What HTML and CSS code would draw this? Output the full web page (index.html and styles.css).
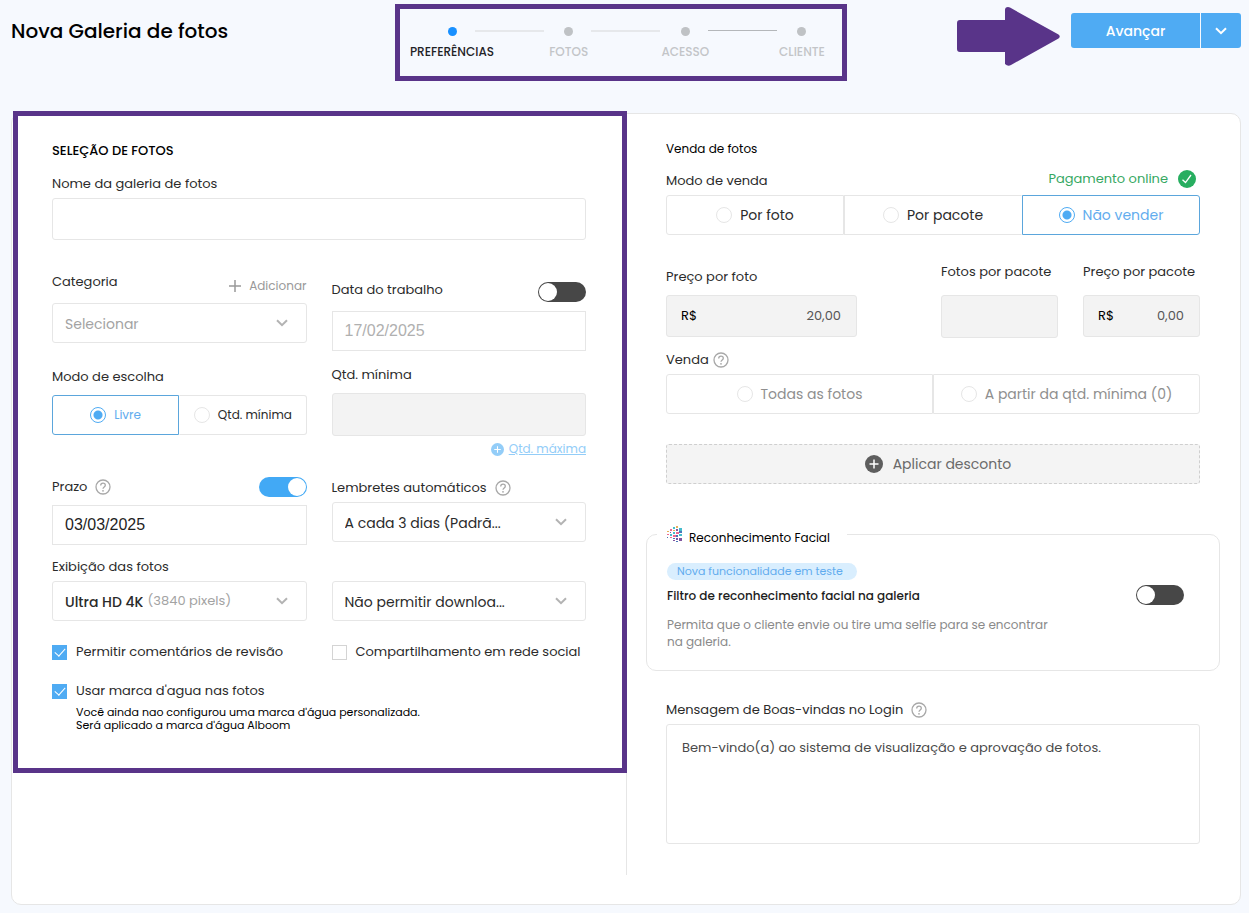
FILE: index.html
```html
<!DOCTYPE html>
<html lang="pt-BR">
<head>
<meta charset="utf-8">
<meta name="viewport" content="width=device-width, initial-scale=1">
<title>Nova Galeria de fotos</title>
<link rel="stylesheet" href="styles.css">
</head>
<body>
<svg class="sprite" aria-hidden="true">
  <symbol id="i-chevron" viewBox="0 0 12 8"><path d="M1 1.2 6 6.2 11 1.2" fill="none" stroke="currentColor" stroke-width="2"/></symbol>
  <symbol id="i-help" viewBox="0 0 16 16"><circle cx="8" cy="8" r="7" fill="none" stroke="currentColor" stroke-width="1.3"/><path d="M5.7 6.4C5.7 5 6.7 4.1 8 4.1s2.3.9 2.3 2.1c0 1.7-2.3 1.8-2.3 3.6" fill="none" stroke="currentColor" stroke-width="1.3"/><circle cx="8" cy="11.8" r=".9" fill="currentColor"/></symbol>
  <symbol id="i-plus-circle" viewBox="0 0 18 18"><circle cx="9" cy="9" r="9" fill="currentColor"/><path d="M9 4.5v9M4.5 9h9" stroke="#fff" stroke-width="1.5"/></symbol>
</svg>

<header class="topbar">
  <h1 class="topbar__title">Nova Galeria de fotos</h1>
  <ol class="steps">
    <li class="steps__item steps__item--current" aria-current="step">PREFERÊNCIAS</li>
    <li class="steps__item">FOTOS</li>
    <li class="steps__item">ACESSO</li>
    <li class="steps__item steps__item--dark">CLIENTE</li>
  </ol>
  <div class="topbar__actions">
    <svg class="arrow" viewBox="0 0 103 59" aria-hidden="true"><path d="M3 13h45V3q0-3 3-3l2 .6 48.500 27q2.500 1.900 0 3.800L54 58q-3 2-6-1V45H3q-3 0-3-3V16q0-3 3-3z" fill="#593489"/></svg>
    <div class="split">
      <button class="split__main" type="button">Avançar</button>
      <button class="split__more" type="button" aria-label="Mais opções"><svg class="chevron" aria-hidden="true"><use href="#i-chevron"/></svg></button>
    </div>
  </div>
</header>

<main class="card">
  <div class="card__side">
    <section class="selection">
      <h2 class="heading heading--strong">SELEÇÃO DE FOTOS</h2>
      <div class="field">
        <div class="field__head"><label for="name">Nome da galeria de fotos</label></div>
        <input class="control control--tall" id="name" type="text">
      </div>

      <div class="columns">
        <div class="columns__left">
          <div class="field">
            <div class="field__head field__head--split">
              <label for="category">Categoria</label>
              <button class="add" type="button"><svg class="add__icon" viewBox="0 0 12 12" aria-hidden="true"><path d="M6 0v12M0 6h12" stroke="currentColor" stroke-width="1.500"/></svg>Adicionar</button>
            </div>
            <div class="picker picker--empty">
              <select class="picker__select" id="category"><option>Selecionar</option></select>
              <svg class="chevron" aria-hidden="true"><use href="#i-chevron"/></svg>
            </div>
          </div>
          <div class="field field--choice">
            <div class="field__head field__head--mid"><span id="choice">Modo de escolha</span></div>
            <div class="seg seg--small" role="radiogroup" aria-labelledby="choice">
              <label class="seg__option seg__option--selected"><input class="radio" type="radio" name="choice" checked>Livre</label>
              <label class="seg__option"><input class="radio" type="radio" name="choice">Qtd. mínima</label>
            </div>
          </div>
          <div class="field field--deadline">
            <div class="field__head field__head--mid">
              <label for="deadline">Prazo</label><svg class="help" aria-hidden="true"><use href="#i-help"/></svg>
              <input class="toggle" type="checkbox" role="switch" aria-label="Prazo" checked>
            </div>
            <input class="control control--date" id="deadline" type="text" value="03/03/2025">
          </div>
          <div class="field field--display">
            <div class="field__head"><label for="display">Exibição das fotos</label></div>
            <div class="picker">
              <select class="picker__select picker__select--strong" id="display"><option>Ultra HD 4K</option></select>
              <span class="picker__note">(3840 pixels)</span>
              <svg class="chevron" aria-hidden="true"><use href="#i-chevron"/></svg>
            </div>
          </div>
        </div>

        <div class="columns__right">
          <div class="field">
            <div class="field__head field__head--split">
              <label for="workdate">Data do trabalho</label>
              <input class="toggle" type="checkbox" role="switch" aria-label="Data do trabalho">
            </div>
            <input class="control control--date" id="workdate" type="text" placeholder="17/02/2025">
          </div>
          <div class="field field--minimum">
            <div class="field__head field__head--mid"><label for="minimum">Qtd. mínima</label></div>
            <input class="control control--off" id="minimum" type="text" disabled>
            <div class="maximum"><svg class="maximum__icon" aria-hidden="true"><use href="#i-plus-circle"/></svg><a href="#maximum">Qtd. máxima</a></div>
          </div>
          <div class="field field--reminders">
            <div class="field__head"><label for="reminders">Lembretes automáticos</label><svg class="help" aria-hidden="true"><use href="#i-help"/></svg></div>
            <div class="picker">
              <select class="picker__select" id="reminders"><option>A cada 3 dias (Padrã...</option></select>
              <svg class="chevron" aria-hidden="true"><use href="#i-chevron"/></svg>
            </div>
          </div>
          <div class="picker picker--download">
            <select class="picker__select" aria-label="Download"><option>Não permitir downloa...</option></select>
            <svg class="chevron" aria-hidden="true"><use href="#i-chevron"/></svg>
          </div>
        </div>
      </div>

      <div class="checks">
        <label class="check"><input class="check__box" type="checkbox" checked>Permitir comentários de revisão</label>
        <label class="check"><input class="check__box" type="checkbox">Compartilhamento em rede social</label>
        <label class="check"><input class="check__box" type="checkbox" checked>Usar marca d'agua nas fotos</label>
      </div>
      <p class="hint">Você ainda nao configurou uma marca d'água personalizada.<br>Será aplicado a marca d'água Alboom</p>
    </section>
  </div>

  <div class="card__side card__side--sale">
    <h2 class="heading">Venda de fotos</h2>
    <div class="field field--mode">
      <div class="field__head">
        <span id="mode">Modo de venda</span>
        <span class="online">Pagamento online<svg class="online__icon" viewBox="0 0 18 18" aria-hidden="true"><circle cx="9" cy="9" r="9" fill="#27ae60"/><path d="M4.500 9.800 7.500 12.600 13 5" fill="none" stroke="#fff" stroke-width="1.300"/></svg></span>
      </div>
      <div class="seg" role="radiogroup" aria-labelledby="mode">
        <label class="seg__option"><input class="radio" type="radio" name="mode">Por foto</label>
        <label class="seg__option"><input class="radio" type="radio" name="mode">Por pacote</label>
        <label class="seg__option seg__option--selected"><input class="radio" type="radio" name="mode" checked>Não vender</label>
      </div>
    </div>

    <div class="prices">
      <div class="prices__photo">
        <div class="field__head field__head--mid"><label for="photo-price">Preço por foto</label></div>
        <div class="money"><span>R$</span><input class="money__input" id="photo-price" type="text" value="20,00" disabled></div>
      </div>
      <div class="prices__pack">
        <div class="field__head field__head--far"><label for="pack-size">Fotos por pacote</label></div>
        <input class="control control--off" id="pack-size" type="text" disabled>
      </div>
      <div class="prices__pack">
        <div class="field__head field__head--far"><label for="pack-price">Preço por pacote</label></div>
        <div class="money"><span>R$</span><input class="money__input" id="pack-price" type="text" value="0,00" disabled></div>
      </div>
    </div>

    <div class="field field--sale">
      <div class="field__head"><span id="sale">Venda</span><svg class="help help--near" aria-hidden="true"><use href="#i-help"/></svg></div>
      <div class="seg seg--off" role="radiogroup" aria-labelledby="sale">
        <label class="seg__option"><input class="radio" type="radio" name="sale" disabled>Todas as fotos</label>
        <label class="seg__option"><input class="radio" type="radio" name="sale" disabled>A partir da qtd. mínima (0)</label>
      </div>
    </div>

    <button class="discount" type="button"><svg class="discount__icon" aria-hidden="true"><use href="#i-plus-circle"/></svg>Aplicar desconto</button>

    <fieldset class="face">
      <legend class="face__legend">
        <svg class="face__logo" viewBox="0 0 15 16" aria-hidden="true">
          <g fill="#ee6a90"><path d="M3 3h2v2H3zM9 6h3v2H9zM0 8h2v1H0zM6 9h3v2H6zM3 11h2v1H3z"/></g>
          <g fill="#45bccd"><path d="M6 1h2v2H6zM12 2h3v3h-3zM12 8h3v2h-3zM6 6h2v2H6zM3 8h2v2H3z"/></g>
          <g fill="#80559f"><path d="M9 3h2v2H9zM12 12h3v3h-3zM9 12h2v2H9zM6 14h2v1H6zM3 6h1v1H3z"/></g>
          <g fill="#e6b25a"><path d="M9 0h2v2H9zM0 5h2v1H0zM6 4h2v1H6z"/></g>
          <g fill="#4a76b8"><path d="M12 5h3v2h-3zM9 9h2v2H9zM6 12h2v1H6zM9 15h2v1H9zM0 11h1v1H0z"/></g>
        </svg>
        <span class="face__name">Reconhecimento Facial</span>
      </legend>
      <div class="face__body">
        <div class="face__text">
          <span class="face__badge">Nova funcionalidade em teste</span>
          <label class="face__title" for="face">Filtro de reconhecimento facial na galeria</label>
          <p class="face__note">Permita que o cliente envie ou tire uma selfie para se encontrar na galeria.</p>
        </div>
        <input class="toggle toggle--face" id="face" type="checkbox" role="switch">
      </div>
    </fieldset>

    <div class="field field--welcome">
      <div class="field__head"><label for="welcome">Mensagem de Boas-vindas no Login</label><svg class="help" aria-hidden="true"><use href="#i-help"/></svg></div>
      <textarea class="control control--area" id="welcome">Bem-vindo(a) ao sistema de visualização e aprovação de fotos.</textarea>
    </div>
  </div>
</main>
</body>
</html>
```
FILE: styles.css
```css
:root {
  --blue: #4fabf3;
  --purple: #593489;
  --line: #e6e6e6;
  --text: #2b2b2b;
  --muted: #a3a3a3;
  --off: #f3f3f3;
}

* { box-sizing: border-box; }

body {
  margin: 0;
  padding: 4px 8px 8px 11px;
  background: #f6f9fe;
  color: var(--text);
  font-family: Poppins, Inter, "Open Sans", sans-serif;
  font-size: 13px;
  line-height: 20px;
}

input, select, textarea, button { font: inherit; color: inherit; margin: 0; }
button { cursor: pointer; }
h1, h2, p, ol { margin: 0; padding: 0; }
.sprite { display: none; }

/* Top bar */
.topbar {
  display: grid;
  grid-template-columns: 384px 452px 1fr;
  align-items: start;
}
.topbar__title {
  padding-top: 12px;
  color: #000;
  font-size: 20px;
  font-weight: 500;
  line-height: 30px;
}
.topbar__actions {
  display: flex;
  justify-content: flex-end;
  align-items: flex-start;
  gap: 11px;
  padding-top: 3px;
}
.arrow { width: 103px; height: 59px; }

.steps {
  display: flex;
  justify-content: space-between;
  height: 77px;
  padding: 18px 5px 0 17px;
  border: 5px solid var(--purple);
  list-style: none;
}
.steps__item {
  position: relative;
  display: flex;
  flex-direction: column;
  align-items: center;
  gap: 6px;
  width: 70px;
  color: #c3c5c8;
  font-size: 12px;
  font-weight: 500;
  white-space: nowrap;
}
.steps__item::before {
  content: "";
  width: 9px;
  height: 9px;
  border-radius: 50%;
  background: #bfc2c5;
}
.steps__item + .steps__item::after {
  content: "";
  position: absolute;
  top: 3px;
  left: -59px;
  width: 69px;
  height: 2px;
  background: #e6e8eb;
}
.steps__item--current { color: #1f2326; }
.steps__item--current::before { background: #1890ff; }
.steps__item + .steps__item--dark::after { height: 1px; background: #b4b7ba; }

.split { display: flex; gap: 1px; margin-top: 6px; }
.split__main,
.split__more {
  height: 35px;
  padding: 0;
  border: 0;
  background: var(--blue);
  color: #fff;
}
.split__main { width: 129px; border-radius: 3px 0 0 3px; font-size: 14px; font-weight: 500; }
.split__more { width: 40px; border-radius: 0 3px 3px 0; }

/* Card */
.card {
  display: grid;
  grid-template-columns: minmax(0, 1fr) minmax(0, 1fr);
  margin-top: 32px;
  padding-bottom: 29px;
  border: 1px solid var(--line);
  border-radius: 10px;
  background: #fff;
}
.card__side--sale {
  padding: 25px 40px 31px 39px;
  border-left: 1px solid var(--line);
}
.selection {
  position: relative;
  padding: 27px 40px 41px;
}
.selection::after {
  content: "";
  position: absolute;
  inset: -3px -1px 0 1px;
  border: 5px solid var(--purple);
  pointer-events: none;
}
.heading {
  margin-bottom: 11px;
  color: #000;
  font-size: 12px;
  font-weight: 400;
  line-height: 20px;
}
.heading--strong { margin-bottom: 12px; font-size: 13px; font-weight: 500; }

/* Fields */
.field__head {
  display: flex;
  align-items: center;
  padding-bottom: 3px;
  line-height: 22px;
}
.field__head--mid { padding-bottom: 7px; }
.field__head--far { padding-bottom: 12px; white-space: nowrap; }
.field__head--split {
  justify-content: space-between;
  align-items: flex-start;
  height: 32px;
  padding-bottom: 9px;
}
.field__head--split > :last-child { align-self: flex-end; }
.field__head .toggle { margin-left: auto; }

.field--choice { margin-top: 23px; }
.field--deadline { margin-top: 41px; }
.field--display { margin-top: 11px; }
.field--minimum { margin-top: 13px; }
.field--reminders { margin-top: 18px; }
.field--sale { margin-top: 11px; }
.field--welcome { margin-top: 28px; }

.control {
  display: block;
  width: 100%;
  height: 40px;
  padding: 0 12px;
  border: 1px solid var(--line);
  border-radius: 3px;
  background: #fff;
}
.control--tall { height: 42px; }
.control--off { height: 43px; background: var(--off); }
.control--date {
  border-radius: 0;
  color: #1f1f1f;
  font-family: "Liberation Sans", Arial, sans-serif;
  font-size: 16px;
}
.control--date::placeholder { color: #b0b0b0; }
.control--area {
  height: 120px;
  padding: 13px 15px;
  color: #4a4a4a;
  resize: none;
}

.columns {
  display: grid;
  grid-template-columns: minmax(0, 1fr) minmax(0, 1fr);
  gap: 25px;
  margin-top: 31px;
}
.columns__right { padding-top: 8px; }

.add {
  display: flex;
  align-items: center;
  gap: 8px;
  padding: 0;
  border: 0;
  background: none;
  color: #999;
  font-size: 12px;
  line-height: 16px;
}
.add__icon { width: 12px; height: 12px; }

.help { width: 16px; height: 16px; margin-left: 8px; color: #a8a8a8; }
.help--near { margin-left: 4px; }
.chevron { flex: none; width: 12px; height: 8px; }

.picker {
  display: flex;
  align-items: center;
  height: 40px;
  padding: 0 18px 0 12px;
  border: 1px solid var(--line);
  border-radius: 3px;
  font-size: 14px;
}
.picker--empty { color: var(--muted); }
.picker--download { margin-top: 39px; }
.picker__select {
  appearance: none;
  field-sizing: content;
  height: 38px;
  padding: 2px 0 0;
  border: 0;
  background: none;
}
.picker__select--strong { font-weight: 500; }
.picker__note { margin-left: 4px; color: var(--muted); font-size: 13px; }
.picker .chevron { margin-left: auto; color: #b3b3b3; }

.maximum {
  display: flex;
  justify-content: flex-end;
  align-items: center;
  gap: 5px;
  padding-top: 3px;
  color: #93cdf8;
  font-size: 12px;
}
.maximum a { color: inherit; }
.maximum__icon { width: 13px; height: 13px; }

/* Segmented radios */
.seg { display: flex; font-size: 14px; }
.seg--small { font-size: 12px; }
.seg--off { color: #8f8f8f; }
.seg__option {
  display: flex;
  flex: 1 1 0;
  justify-content: center;
  align-items: center;
  gap: 8px;
  height: 40px;
  border: 1px solid var(--line);
  white-space: nowrap;
}
.seg__option:first-child { border-radius: 3px 0 0 3px; }
.seg__option:last-child { border-radius: 0 3px 3px 0; }
.seg__option--selected { border-color: #5ba6dc; color: #62acee; }
.seg__option--selected + .seg__option { border-left-color: transparent; }
.seg__option:has(+ .seg__option--selected) { border-right-color: transparent; }

.radio {
  appearance: none;
  width: 16px;
  height: 16px;
  border: 1px solid #e6e6e6;
  border-radius: 50%;
}
.radio:checked {
  border-color: var(--blue);
  background: radial-gradient(circle, var(--blue) 4px, transparent 5px);
}

/* Switches */
.toggle {
  appearance: none;
  flex: none;
  display: flex;
  width: 48px;
  height: 20px;
  padding: 1px;
  border-radius: 10px;
  background: #474747;
}
.toggle::before {
  content: "";
  width: 18px;
  height: 18px;
  border-radius: 50%;
  background: #fff;
}
.toggle:checked { justify-content: flex-end; background: #42a9f5; }
.toggle--face { margin-top: 22px; }

/* Tick boxes */
.checks {
  display: grid;
  grid-template-columns: minmax(0, 1fr) minmax(0, 1fr);
  gap: 17px 25px;
  margin-top: 20px;
  line-height: 22px;
}
.check {
  display: flex;
  align-items: center;
  gap: 9px;
  white-space: nowrap;
}
.check__box {
  appearance: none;
  display: flex;
  justify-content: center;
  align-items: center;
  width: 15px;
  height: 15px;
  border: 1px solid #d4d4d4;
}
.check__box:checked { border-color: var(--blue); background: var(--blue); }
.check__box:checked::before {
  content: "";
  width: 5px;
  height: 9px;
  margin-bottom: 3px;
  border: solid #fff;
  border-width: 0 1px 1px 0;
  transform: rotate(42deg);
}
.hint {
  padding: 4px 0 0 24px;
  color: #000;
  font-size: 11px;
  line-height: 13px;
}

/* Sale */
.online {
  display: flex;
  align-items: center;
  gap: 10px;
  margin: -4px 4px 0 auto;
  color: #36a862;
}
.online__icon { width: 18px; height: 18px; }

.prices {
  display: flex;
  align-items: flex-start;
  gap: 25px;
  margin-top: 26px;
}
.prices__photo { flex: 0 1 191px; margin: 5px auto 0 0; }
.prices__pack { flex: 0 1 117px; }
.money {
  display: flex;
  align-items: center;
  height: 42px;
  padding: 0 15px 0 14px;
  border: 1px solid var(--line);
  border-radius: 3px;
  background: var(--off);
  color: #000;
}
.money__input {
  flex: 1;
  width: 0;
  padding: 0;
  border: 0;
  background: none;
  color: #555;
  text-align: right;
}

.discount {
  display: flex;
  justify-content: center;
  align-items: center;
  gap: 10px;
  width: 100%;
  height: 40px;
  margin-top: 30px;
  padding: 0 0 0 10px;
  border: 1px dashed #cfcfcf;
  border-radius: 3px;
  background: #f4f4f4;
  color: #6a6a6a;
  font-size: 14px;
}
.discount__icon { width: 18px; height: 18px; color: #5e5e5e; }

.face {
  min-width: 0;
  margin: 36px -20px 0;
  padding: 0 35px 20px 10px;
  border: 1px solid var(--line);
  border-radius: 10px;
}
.face__legend {
  display: flex;
  align-items: center;
  gap: 7px;
  padding: 0 17px 0 10px;
  color: #000;
  font-size: 12px;
}
.face__name { padding-top: 8px; }
.face__logo { width: 15px; height: 16px; }
.face__body {
  display: flex;
  justify-content: space-between;
  align-items: flex-start;
  padding: 15px 0 0 10px;
  font-size: 12px;
}
.face__text {
  display: flex;
  flex-direction: column;
  align-items: flex-start;
  max-width: 390px;
}
.face__badge {
  padding: 0 14px 0 10px;
  border-radius: 9px;
  background: #d9eefe;
  color: #62acee;
  font-size: 11px;
  line-height: 17px;
}
.face__title { margin-top: 6px; color: #1c1c1c; font-weight: 500; }
.face__note { margin-top: 10px; color: #8a8a8a; line-height: 17px; }
```
